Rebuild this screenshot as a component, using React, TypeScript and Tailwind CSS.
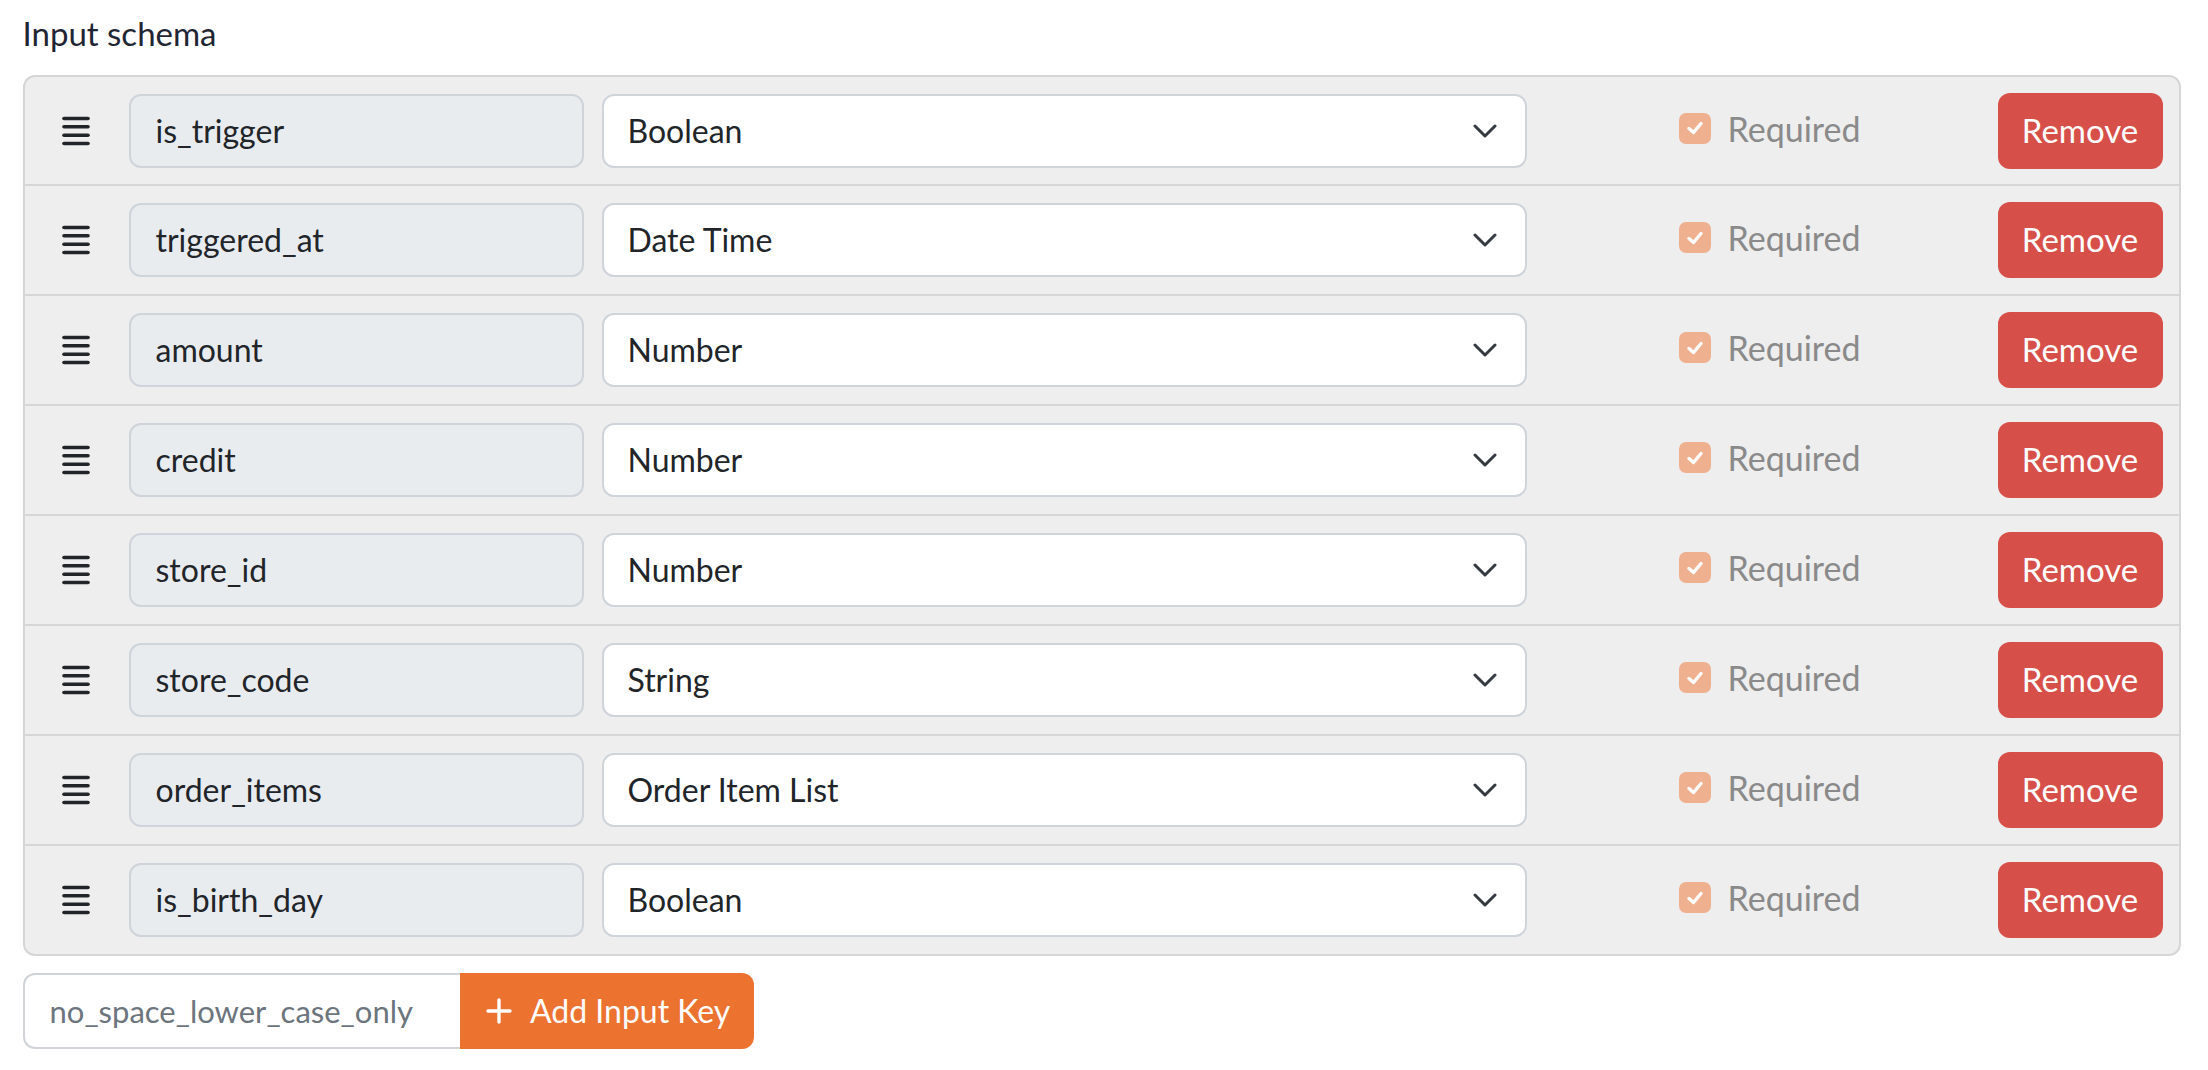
import React from "react";

type Field = { key: string; type: string };

const fields: Field[] = [
  { key: "is_trigger", type: "Boolean" },
  { key: "triggered_at", type: "Date Time" },
  { key: "amount", type: "Number" },
  { key: "credit", type: "Number" },
  { key: "store_id", type: "Number" },
  { key: "store_code", type: "String" },
  { key: "order_items", type: "Order Item List" },
  { key: "is_birth_day", type: "Boolean" },
];

function DragHandle() {
  return (
    <svg width="28" height="30" viewBox="0 0 28 30" className="shrink-0">
      {[2.5, 10.8, 19.2, 27.5].map((y) => (
        <line key={y} x1="2" y1={y} x2="26" y2={y} stroke="#212529" strokeWidth="3.6" strokeLinecap="round" />
      ))}
    </svg>
  );
}

function Chevron() {
  return (
    <svg width="24" height="14" viewBox="0 0 24 14" className="shrink-0">
      <polyline points="2,2 12,12 22,2" fill="none" stroke="#343a40" strokeWidth="3" strokeLinecap="round" strokeLinejoin="round" />
    </svg>
  );
}

function CheckBox() {
  return (
    <div className="w-[32px] h-[31px] rounded-[7px] bg-[#efb08f] flex items-center justify-center shrink-0">
      <svg width="18" height="16" viewBox="0 0 18 16">
        <polyline points="3,8.5 7.5,12.5 15,3.5" fill="none" stroke="white" strokeWidth="3.4" strokeLinecap="round" strokeLinejoin="round" />
      </svg>
    </div>
  );
}

function SchemaRow({ field, first }: { field: Field; first: boolean }) {
  return (
    <div
      className={
        "flex items-center pl-[37px] pr-[16px] " +
        (first ? "h-[107px]" : "h-[110px] border-t-2 border-[#d6d6d6]")
      }
    >
      <DragHandle />

      {/* key (read only) */}
      <div className="ml-[39px] w-[455px] h-[74px] flex items-center pl-[25px] bg-[#e9ecef] border-2 border-[#ced4da] rounded-[12px] text-[32px] text-[#212529]">
        {field.key}
      </div>

      {/* type select */}
      <div className="ml-[18px] w-[925px] h-[74px] flex items-center justify-between pl-[24px] pr-[28px] bg-white border-2 border-[#ced4da] rounded-[12px] text-[32px] text-[#212529]">
        <span>{field.type}</span>
        <Chevron />
      </div>

      {/* required */}
      <div className="ml-[152px] mb-[5px] flex items-center gap-[17px]">
        <CheckBox />
        <span className="text-[34px] text-[#8a8a8a]">Required</span>
      </div>

      <div className="flex-1" />
      <button className="w-[165px] h-[76px] rounded-[12px] bg-[#d74f49] text-white text-[33px] flex items-center justify-center">
        Remove
      </button>
    </div>
  );
}

export default function App() {
  return (
    <div className="min-h-screen bg-white font-['Lato',sans-serif] pl-[22.5px] pt-[14px]">
      <h2 className="text-[33px] leading-[38px] text-[#1f2533]">Input schema</h2>

      {/* Fields */}
      <div className="mt-[23px] w-[2158px] bg-[#eeeeee] border-2 border-[#d6d6d6] rounded-[12px]">
        {fields.map((f, i) => (
          <SchemaRow key={f.key} field={f} first={i === 0} />
        ))}
      </div>

      {/* Add key */}
      <div className="mt-[17px] flex">
        <input
          className="w-[437.5px] h-[76px] pl-[25px] bg-white border-2 border-r-0 border-[#d0d4d8] rounded-l-[12px] text-[31px] text-[#212529] placeholder:text-[#6c757d] outline-none"
          placeholder="no_space_lower_case_only"
        />
        <button className="w-[294px] h-[76px] rounded-r-[12px] bg-[#ec7230] text-white text-[32px] flex items-center pl-[26px] gap-[18px]">
          <svg width="26" height="26" viewBox="0 0 26 26">
            <line x1="13" y1="2" x2="13" y2="24" stroke="white" strokeWidth="3.4" strokeLinecap="round" />
            <line x1="2" y1="13" x2="24" y2="13" stroke="white" strokeWidth="3.4" strokeLinecap="round" />
          </svg>
          <span>Add Input Key</span>
        </button>
      </div>
    </div>
  );
}
